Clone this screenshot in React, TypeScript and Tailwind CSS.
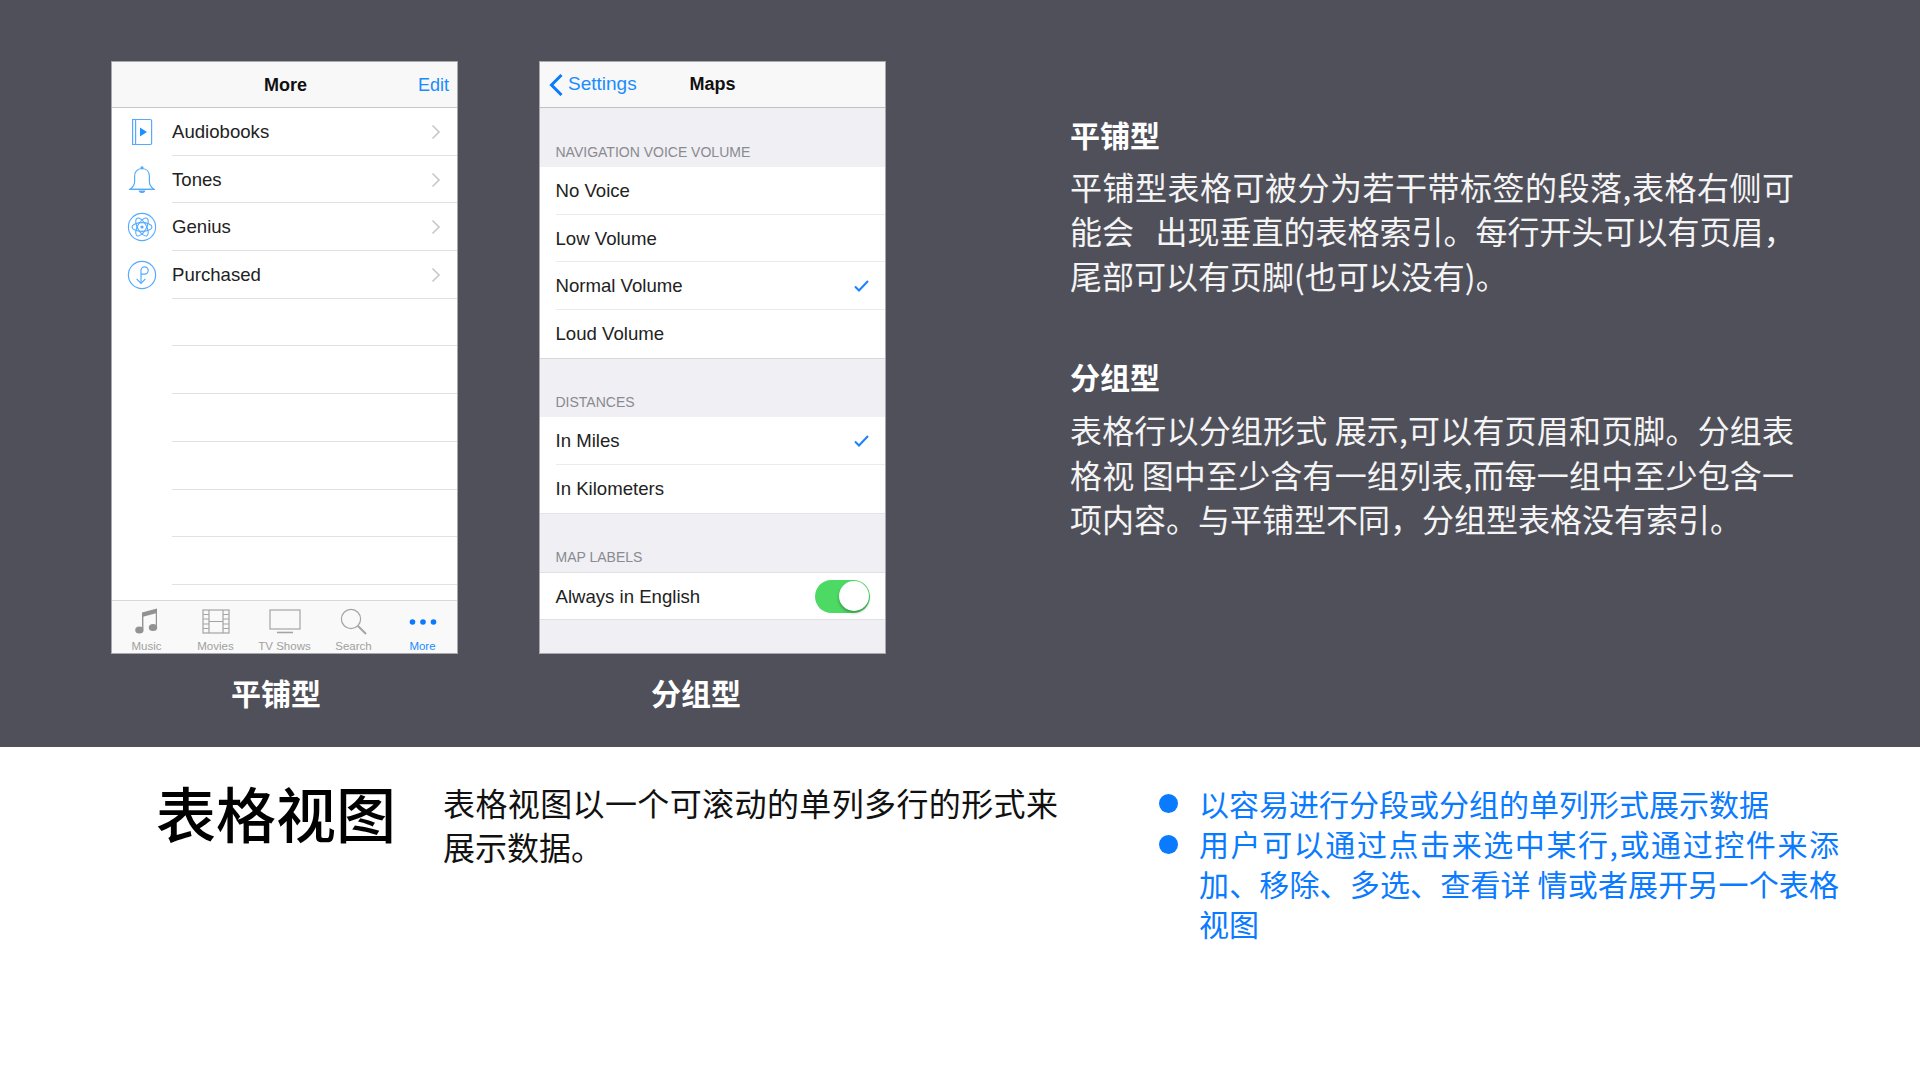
const cjk = "font-['Noto_Sans_CJK_SC','Liberation_Sans',sans-serif]";
const ios = "font-['Liberation_Sans','Noto_Sans_CJK_SC',sans-serif]";

const Chevron = () => (
  <svg width="10" height="16" viewBox="0 0 10 16" fill="none" className="shrink-0">
    <path d="M1.5 1.5 8 8l-6.5 6.5" stroke="#c7c7cc" strokeWidth="1.6" />
  </svg>
);

const Check = () => (
  <svg width="15" height="12" viewBox="0 0 15 12" fill="none" className="shrink-0">
    <path d="M1 6.5 5 10.5 14 1" stroke="#1a82fb" strokeWidth="2" />
  </svg>
);

const BookIcon = () => (
  <svg width="30" height="30" viewBox="0 0 30 30" fill="none" stroke="#55aaff" strokeWidth="1.2">
    <path d="M5.6 2.5h17.6a1.4 1.4 0 0 1 1.4 1.4v22.2a1.4 1.4 0 0 1-1.4 1.4H5.6z" />
    <path d="M8.6 2.5v25" />
    <path d="M13 10.5v9l7-4.5z" fill="#1e90ff" stroke="none" />
  </svg>
);

const BellIcon = () => (
  <svg width="30" height="30" viewBox="0 0 30 30" fill="none" stroke="#55aaff" strokeWidth="1.2">
    <circle cx="15" cy="2.8" r="1" fill="#55aaff" />
    <path d="M15 3.5c-5 0-7.4 3.6-7.4 8v5.5c0 3.4-1.8 5-4.4 7.4h23.6c-2.6-2.4-4.4-4-4.4-7.4v-5.5c0-4.4-2.4-8-7.4-8z" />
    <path d="M2.5 24.4h25" strokeLinecap="round" />
    <path d="M12.5 26.2h5c-.6 1.6-4.4 1.6-5 0z" fill="#55aaff" />
  </svg>
);

const AtomIcon = () => (
  <svg width="30" height="30" viewBox="0 0 30 30" fill="none" stroke="#55aaff" strokeWidth="1.1">
    <circle cx="15" cy="15" r="13.6" />
    <ellipse cx="15" cy="15" rx="10" ry="4.4" />
    <ellipse cx="15" cy="15" rx="10" ry="4.4" transform="rotate(60 15 15)" />
    <ellipse cx="15" cy="15" rx="10" ry="4.4" transform="rotate(120 15 15)" />
    <circle cx="15" cy="15" r="1.6" fill="#55aaff" stroke="none" />
  </svg>
);

const PurchasedIcon = () => (
  <svg width="30" height="30" viewBox="0 0 30 30" fill="none" stroke="#55aaff" strokeWidth="1.2">
    <circle cx="15" cy="15" r="13.6" />
    <path d="M14 23V10.5a3.6 3.6 0 1 1 3.6 3.6H14" />
    <path d="M9.6 18.8 14 23.4l4.4-4.6" />
  </svg>
);

const MusicIcon = () => (
  <svg width="26" height="27" viewBox="0 0 26 27" fill="#929292">
    <path d="M8 4.5 23 .5v4.5L8 9z" />
    <path d="M8 6h1.4v15H8zM21.8 3H23v15h-1.2z" />
    <ellipse cx="5.4" cy="22" rx="4.2" ry="3.6" />
    <ellipse cx="19" cy="19.5" rx="4.2" ry="3.6" />
  </svg>
);

const FilmIcon = () => (
  <svg width="28" height="25" viewBox="0 0 28 25" fill="none" stroke="#a4a4a4" strokeWidth="1.2">
    <rect x="1" y="1" width="26" height="23" />
    <path d="M7 1v23M21 1v23M7 12.5h14M1 5.5h6M1 10h6M1 15h6M1 19.5h6M21 5.5h6M21 10h6M21 15h6M21 19.5h6" />
  </svg>
);

const TvIcon = () => (
  <svg width="32" height="25" viewBox="0 0 32 25" fill="none" stroke="#a4a4a4" strokeWidth="1.2">
    <rect x="1" y="1" width="30" height="19" />
    <path d="M8 23.5h16" strokeWidth="1.6" />
  </svg>
);

const SearchIcon = () => (
  <svg width="28" height="28" viewBox="0 0 28 28" fill="none" stroke="#a4a4a4" strokeWidth="1.2">
    <circle cx="11" cy="11" r="9.6" />
    <path d="m18 18 8 8" strokeWidth="2" />
  </svg>
);

const DotsIcon = () => (
  <svg width="28" height="28" viewBox="0 0 28 28" fill="#0a7aff">
    <circle cx="3.5" cy="14" r="2.8" />
    <circle cx="14" cy="14" r="2.8" />
    <circle cx="24.5" cy="14" r="2.8" />
  </svg>
);

const plainRows = [
  { label: 'Audiobooks', icon: <BookIcon /> },
  { label: 'Tones', icon: <BellIcon /> },
  { label: 'Genius', icon: <AtomIcon /> },
  { label: 'Purchased', icon: <PurchasedIcon /> },
];

const tabs = [
  { label: 'Music', icon: <MusicIcon /> },
  { label: 'Movies', icon: <FilmIcon /> },
  { label: 'TV Shows', icon: <TvIcon /> },
  { label: 'Search', icon: <SearchIcon /> },
  { label: 'More', icon: <DotsIcon />, active: true },
];

const PlainPhone = () => (
  <div className={`${ios} flex h-[593px] w-[347px] flex-col border border-[#a9a9ad] bg-white`}>
    <div className="relative flex h-[46px] shrink-0 items-center justify-center border-b border-[#c8c7cc] bg-[#f8f8f8] pl-[2px] pt-[1px]">
      <span className="text-[18px] font-bold text-[#111]">More</span>
      <span className="absolute right-[8px] text-[18px] text-[#1a8cff]">Edit</span>
    </div>
    <div className="flex-1">
      {plainRows.map((row) => (
        <div key={row.label} className="flex h-[47.7px] items-center">
          <div className="flex w-[60px] shrink-0 justify-center pr-[1px]">{row.icon}</div>
          <div className="flex h-full flex-1 items-center justify-between border-b border-[#e2e2e6] pr-[16px] pt-[1px] text-[18.6px] text-[#222]">
            {row.label}
            <Chevron />
          </div>
        </div>
      ))}
      {[0, 1, 2, 3, 4, 5].map((i) => (
        <div key={i} className="ml-[60px] h-[47.7px] border-b border-[#e2e2e6]" />
      ))}
    </div>
    <div className="flex h-[53px] shrink-0 border-t border-[#d8d8d8] bg-[#f9f9f9]">
      {tabs.map((tab) => (
        <div key={tab.label} className="flex w-[69.4px] flex-col items-center">
          <div className="flex h-[38px] items-center justify-center pt-[3px]">{tab.icon}</div>
          <span className={`pt-[1px] text-[11.5px] leading-[13px] ${tab.active ? 'text-[#1a8cff]' : 'text-[#a0a0a0]'}`}>
            {tab.label}
          </span>
        </div>
      ))}
    </div>
  </div>
);

const GroupHeader = ({ text, className }: { text: string; className: string }) => (
  <div className={`flex items-end pb-[7px] pl-[15.5px] text-[14px] leading-[16px] text-[#8a8a8f] ${className}`}>
    {text}
  </div>
);

const SettingRow = ({ label, checked, last }: { label: string; checked?: boolean; last?: boolean }) => (
  <div className="flex h-[47.7px] bg-white pl-[15.5px]">
    <div className={`flex flex-1 items-center justify-between pr-[16px] pt-[1px] text-[18.6px] text-[#222] ${last ? '' : 'border-b border-[#ececf0]'}`}>
      {label}
      {checked && <Check />}
    </div>
  </div>
);

const GroupedPhone = () => (
  <div className={`${ios} flex h-[593px] w-[347px] flex-col overflow-hidden border border-[#a9a9ad] bg-[#efeff4]`}>
    <div className="relative flex h-[46px] shrink-0 items-center justify-center border-b border-[#c0c0c4] bg-[#f8f8f8]">
      <span className="absolute left-[9px] flex items-center gap-[5px] text-[19px] text-[#1a8cff]">
        <svg width="14" height="22" viewBox="0 0 14 22" fill="none">
          <path d="M12.5 1 2.5 11l10 10" stroke="#0a7aff" strokeWidth="3" />
        </svg>
        Settings
      </span>
      <span className="text-[18px] font-bold text-[#111]">Maps</span>
    </div>
    <GroupHeader text="NAVIGATION VOICE VOLUME" className="h-[59px]" />
    <div className="border-b border-[#d8d8dc]">
      <SettingRow label="No Voice" />
      <SettingRow label="Low Volume" />
      <SettingRow label="Normal Volume" checked />
      <SettingRow label="Loud Volume" last />
    </div>
    <GroupHeader text="DISTANCES" className="h-[58.5px]" />
    <div className="border-b border-[#e4e4e8]">
      <SettingRow label="In Miles" checked />
      <SettingRow label="In Kilometers" last />
    </div>
    <GroupHeader text="MAP LABELS" className="h-[58.5px]" />
    <div className="flex h-[48px] items-center justify-between border-y border-[#e0e0e4] bg-white pl-[15.5px] pr-[15px] text-[18.6px] text-[#222]">
      <span className="pt-[1px]">Always in English</span>
      <div className="flex h-[33px] w-[55px] items-center justify-end rounded-full bg-[#4cd964] pr-[1px]">
        <div className="h-[30px] w-[30px] rounded-full bg-white shadow-[0_2px_3px_rgba(0,0,0,0.3)]" />
      </div>
    </div>
  </div>
);

// each source line is kept as its own block, the original text was justified
const Line = ({ children, last }: { children: string; last?: boolean }) => (
  <div className={`whitespace-pre ${last ? '' : 'text-justify [text-align-last:justify]'}`}>{children}</div>
);

export default function App() {
  return (
    <div className={`${cjk} flex h-[1080px] w-[1920px] flex-col overflow-hidden bg-white`}>
      <div className="flex h-[747px] shrink-0 bg-[#50505a] pl-[111px] pt-[61px] text-white">
        <div className="flex w-[347px] flex-col">
          <PlainPhone />
          <div className="ml-[120px] mt-[18px] text-[30px] font-bold leading-[40px]">平铺型</div>
        </div>
        <div className="ml-[81px] flex w-[347px] flex-col">
          <GroupedPhone />
          <div className="ml-[112px] mt-[18px] text-[30px] font-bold leading-[40px]">分组型</div>
        </div>
        <div className="ml-[184px] w-[724px] text-[32px] leading-[44.5px] text-[#f4f4f4]">
          <h2 className="mt-[54.5px] text-[30px] font-bold leading-[36px] text-white">平铺型</h2>
          <div className="mt-[12px]">
            <Line>平铺型表格可被分为若干带标签的段落,表格右侧可</Line>
            <Line>{'能会   出现垂直的表格索引。每行开头可以有页眉\uFF0C'}</Line>
            <Line last>尾部可以有页脚(也可以没有)。</Line>
          </div>
          <h2 className="mt-[61px] text-[30px] font-bold leading-[36px] text-white">分组型</h2>
          <div className="mt-[13px]">
            <Line>表格行以分组形式 展示,可以有页眉和页脚。分组表</Line>
            <Line>格视 图中至少含有一组列表,而每一组中至少包含一</Line>
            <Line last>{'项内容。与平铺型不同\uFF0C分组型表格没有索引。'}</Line>
          </div>
        </div>
      </div>
      <div className="flex flex-1 items-start">
        <h1 className="ml-[156px] mt-[29.5px] text-[60px] font-medium leading-[70px] text-black">表格视图</h1>
        <div className="ml-[47px] mt-[33px] w-[615px] text-[32px] leading-[44px] text-[#111]">
          <Line>表格视图以一个可滚动的单列多行的形式来</Line>
          <Line last>展示数据。</Line>
        </div>
        <div className="ml-[101px] mt-[35.5px] w-[680px] text-[30px] leading-[40px] text-[#0a7aff]">
          <div className="flex">
            <div className="mr-[21px] mt-[11.5px] h-[19px] w-[19px] shrink-0 rounded-full bg-[#0a7aff]" />
            <Line last>以容易进行分段或分组的单列形式展示数据</Line>
          </div>
          <div className="flex">
            <div className="mr-[21px] mt-[12.5px] h-[19px] w-[19px] shrink-0 rounded-full bg-[#0a7aff]" />
            <div className="w-[642px]">
              <Line>用户可以通过点击来选中某行,或通过控件来添</Line>
              <Line>加、移除、多选、查看详 情或者展开另一个表格</Line>
              <Line last>视图</Line>
            </div>
          </div>
        </div>
      </div>
    </div>
  );
}
